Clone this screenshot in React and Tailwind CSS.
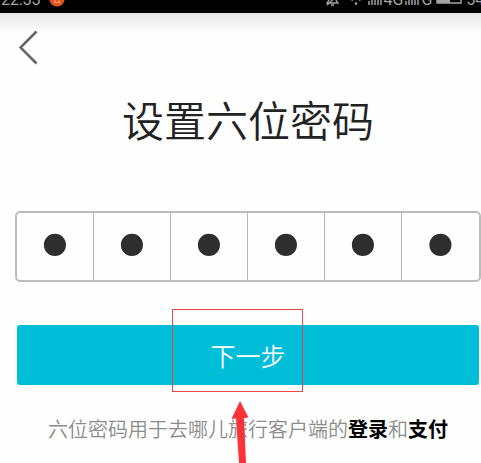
import { useState } from "react";

function StatusBar() {
  return (
    <header className="flex h-[13px] items-end justify-between overflow-hidden bg-black pb-[5px] pl-px font-['Roboto',sans-serif] text-base leading-4 text-[#a3a3a3]">
      <div className="flex items-end gap-2">
        <span className="h-4">22:33</span>
        <svg className="h-4 w-4" viewBox="0 0 16 16" aria-hidden="true">
          <circle cx="8" cy="7" r="7.6" fill="#e2521b" />
          <path d="M5 10.500h6M6 7v3.500M10 7v3.500" stroke="#f5a27e" fill="none" />
        </svg>
      </div>
      <div className="-mr-[15px] flex items-end">
        <svg className="mr-2 h-4 w-4" viewBox="0 0 16 16" fill="none" stroke="#a3a3a3" strokeWidth="1.300" aria-hidden="true">
          <path d="M3 11h11l-2-3V4a4 4 0 0 0-7 0v4zM7 13h3M3 13 15 2" />
        </svg>
        <svg className="mr-1 h-4 w-4" viewBox="0 0 16 16" fill="none" stroke="#a3a3a3" strokeWidth="1.500" aria-hidden="true">
          <path d="M1 4q7-6 14 0M3.500 8.500q4.500-4 9 0" />
          <circle cx="8" cy="11.500" r="1.300" fill="#a3a3a3" stroke="none" />
        </svg>
        <svg className="h-4 w-4" viewBox="0 0 16 16" stroke="#a3a3a3" strokeWidth="1.500" aria-hidden="true">
          <path d="M1 9v4M4 7v6M7 4v9M10 2v11M13 0v13" />
        </svg>
        <span className="h-4">4G</span>
        <svg className="ml-[2px] h-4 w-4" viewBox="0 0 16 16" stroke="#a3a3a3" strokeWidth="1.500" aria-hidden="true">
          <path d="M1 9v4M4 7v6M7 4v9M10 2v11M13 0v13" />
        </svg>
        <span className="mr-1 h-4">G</span>
        <svg className="mr-1 h-4 w-[26px]" viewBox="0 0 26 16" aria-hidden="true">
          <path d="M1 1h24v10H1z" fill="none" stroke="#a3a3a3" strokeWidth="1.500" />
          <path d="M1 1h13v10H1z" fill="#a3a3a3" />
        </svg>
        <span className="h-4">54%</span>
      </div>
    </header>
  );
}

function PasswordBoxes() {
  const [digits, setDigits] = useState(["1", "2", "3", "4", "5", "6"]);
  return (
    <fieldset className="-mr-[2px] grid h-[71px] grid-cols-6 divide-x divide-[#b8b8b8] overflow-hidden rounded-[5px] border-2 border-[#bcbcbc]">
      {digits.map((digit, i) => (
        <input
          key={i}
          type="password"
          maxLength={1}
          value={digit}
          aria-label={`密码第${i + 1}位`}
          onChange={(e) => setDigits(digits.map((d, j) => (j === i ? e.target.value : d)))}
          className="h-[67px] w-full min-w-0 text-center font-['DejaVu_Sans',sans-serif] text-[76px] leading-[67px] text-[#2e2e2e] outline-none"
        />
      ))}
    </fieldset>
  );
}

function Pointer() {
  return (
    <svg
      className="pointer-events-none absolute top-full left-1/2 mt-[10px] ml-[2px] h-[62px] w-5 -translate-x-1/2"
      viewBox="0 0 20 62"
      fill="#fb3338"
      aria-hidden="true"
    >
      <path d="M10 0 18.500 16.500l-4.500.5L16 62H9L6 17.500 1.500 18z" />
    </svg>
  );
}

export default function App() {
  return (
    <div className="h-screen overflow-hidden bg-[#fefefe] font-['Noto_Sans_CJK_SC',sans-serif]">
      <StatusBar />
      <div className="h-5 bg-linear-to-b from-[#e6e6e6] to-[#fefefe]" />
      <main className="flex flex-col pr-[2px] pl-[17px]">
        <button type="button" aria-label="返回" className="-mt-1 ml-px h-9 w-5">
          <svg className="h-9 w-5" viewBox="0 0 20 36" fill="none" stroke="#666" strokeWidth="2.500" aria-hidden="true">
            <path d="M18.500 2.500 2.500 18.500l16 16" />
          </svg>
        </button>
        <h1 className="mt-[26px] text-center text-[42px] leading-[56px] font-[350] text-[#222]">
          设置六位密码
        </h1>
        <div className="mt-16 -ml-[2px]">
          <PasswordBoxes />
        </div>
        <div className="relative mt-[43px]">
          <button type="button" className="h-[60px] w-full rounded-[3px] bg-[#00bdd8] text-[25px] leading-8 font-[350] text-white">
            下一步
          </button>
          <div className="pointer-events-none absolute -top-4 left-1/2 -ml-[76px] h-[83px] w-[131px] border border-[#e5484d]">
            <Pointer />
          </div>
        </div>
        <p className="mt-[29px] text-center text-[20px] leading-[30px] font-[350] whitespace-nowrap text-[#8c8c8c]">
          六位密码用于去哪儿旅行客户端的
          <b className="font-bold text-black">登录</b>和<b className="font-bold text-black">支付</b>
        </p>
      </main>
    </div>
  );
}
